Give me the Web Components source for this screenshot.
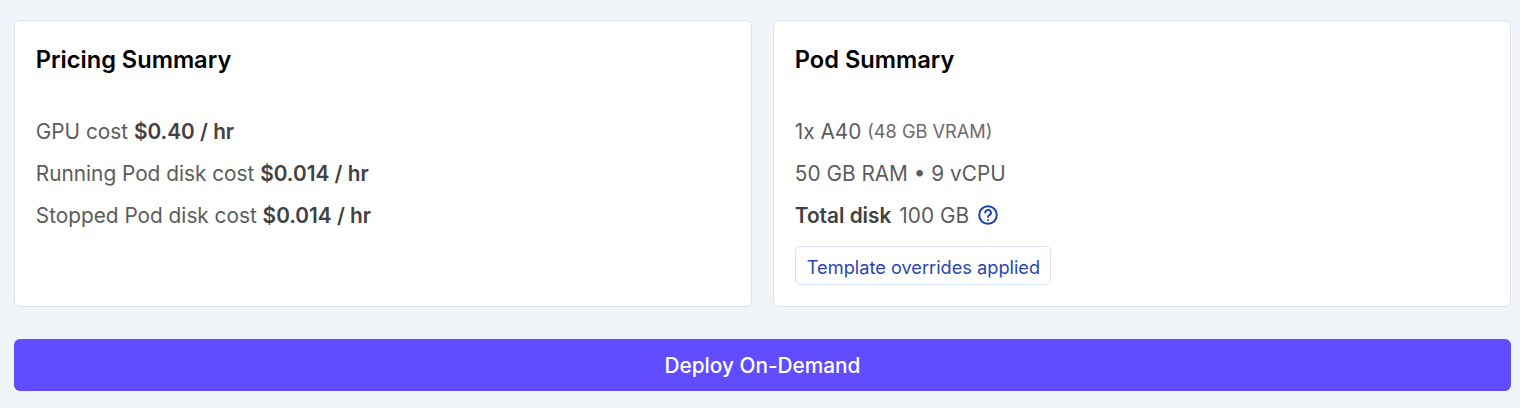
<!DOCTYPE html>
<html>
<head>
<meta charset="utf-8">
<title>Deploy summary</title>
<style>
  html, body { margin: 0; background: #f1f4f9; }
  body { font-family: Inter, "Liberation Sans", sans-serif; }
</style>
</head>
<body>
<template id="summary-page-tpl">
  <style>
    :host { display: block; width: 1497px; padding: 20px 9px 17px 14px; }
    .cards { display: grid; grid-template-columns: 738px 738px; column-gap: 21px; margin-bottom: 32px; }
  </style>
  <div class="cards"><slot name="card"></slot></div>
  <slot></slot>
</template>

<template id="summary-card-tpl">
  <style>
    :host { display: block; box-sizing: border-box; height: 287px; padding: 24px 20px 24px 20.8px; background: #fff; border: 1px solid #e0e4ea; border-radius: 6px; }
    h2 { margin: 0 0 35px; font-size: 23.6px; line-height: 30px; font-weight: 600; color: #000; }
  </style>
  <h2><slot name="title"></slot></h2>
  <slot></slot>
</template>

<template id="summary-line-tpl">
  <style>
    :host { display: flex; align-items: center; height: 42px; font-size: 20.8px; color: #5c5c5c; white-space: pre; }
    ::slotted(b) { font-weight: 600; color: #424242; }
    ::slotted(small) { font-size: 18.2px; color: #6b6b6b; }
    ::slotted(.disk-label) { margin-right: 8px; }
  </style>
  <slot></slot>
</template>

<template id="override-tag-tpl">
  <style>
    :host { display: inline-block; box-sizing: border-box; height: 39px; margin-top: 9.6px; padding: 1px 10.4px 0 11px; line-height: 38px; font-size: 18.2px; color: #2b46b3; background: #fff; border: 1px solid #d6e4fc; border-radius: 5px; }
  </style>
  <slot></slot>
</template>

<template id="deploy-button-tpl">
  <style>
    :host { display: block; }
    button { display: block; width: 100%; height: 52px; padding: 0; border: 0; border-radius: 6px; background: #614dff; color: #fff; font: 500 20.8px Inter, "Liberation Sans", sans-serif; }
  </style>
  <button><slot></slot></button>
</template>

<template id="help-icon-tpl">
  <style>
    :host { display: inline-flex; margin-left: 9px; color: #1e40af; }
    svg { display: block; }
  </style>
  <svg width="20" height="20" viewBox="0 0 20 20" fill="none" stroke="currentColor" stroke-width="2" stroke-linecap="round">
    <circle cx="10" cy="10" r="8.8"/>
    <path d="M7.3 7.6a2.8 2.8 0 1 1 4 2.6c-.9.4-1.3 1-1.3 1.8"/>
    <path d="M10 15v.1"/>
  </svg>
</template>

<summary-page>
  <summary-card slot="card">
    <span slot="title">Pricing Summary</span>
    <summary-line>GPU cost <b>$0.40 / hr</b></summary-line>
    <summary-line>Running Pod disk cost <b>$0.014 / hr</b></summary-line>
    <summary-line>Stopped Pod disk cost <b>$0.014 / hr</b></summary-line>
  </summary-card>
  <summary-card slot="card">
    <span slot="title">Pod Summary</span>
    <summary-line>1x A40 <small>(48 GB VRAM)</small></summary-line>
    <summary-line>50 GB RAM • 9 vCPU</summary-line>
    <summary-line><b class="disk-label">Total disk</b>100 GB<help-icon></help-icon></summary-line>
    <override-tag>Template overrides applied</override-tag>
  </summary-card>
  <deploy-button>Deploy On-Demand</deploy-button>
</summary-page>

<script>
  // every element just stamps its own template into an open shadow root
  function defineFromTemplate(name) {
    customElements.define(name, class extends HTMLElement {
      constructor() {
        super();
        this.attachShadow({ mode: 'open' });
        const tpl = document.getElementById(name + '-tpl');
        this.shadowRoot.appendChild(tpl.content.cloneNode(true));
      }
    });
  }

  ['summary-page', 'summary-card', 'summary-line', 'override-tag', 'deploy-button', 'help-icon'].forEach(defineFromTemplate);
</script>
</body>
</html>
